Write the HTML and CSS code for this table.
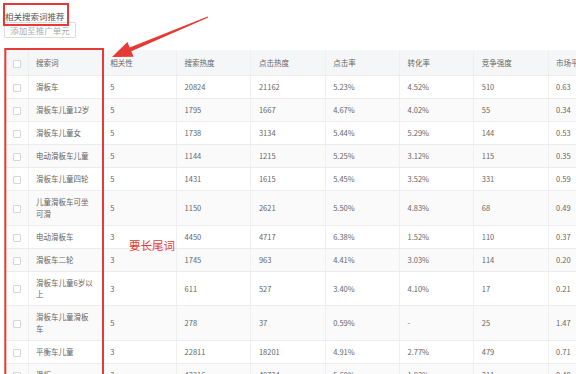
FILE: index.html
```html
<!DOCTYPE html>
<html lang="zh-CN">
<head>
<meta charset="utf-8">
<title>相关搜索词推荐</title>
<link rel="stylesheet" href="styles.css">
</head>
<body>
<div class="page">
  <div class="title">相关搜索词推荐</div>
  <button class="btn" disabled>添加至推广单元</button>
  <table class="grid">
    <colgroup>
      <col class="c-chk"><col class="c-w"><col class="c-w"><col class="c-w"><col class="c-w"><col class="c-w"><col class="c-w"><col class="c-w"><col class="c-w">
    </colgroup>
    <thead>
      <tr><th class="chk"><span class="box"></span></th><th>搜索词</th><th>相关性</th><th>搜索热度</th><th>点击热度</th><th>点击率</th><th>转化率</th><th>竞争强度</th><th>市场平均出价</th></tr>
    </thead>
    <tbody>
      <tr><td class="chk"><span class="box"></span></td><td>滑板车</td><td>5</td><td>20824</td><td>21162</td><td>5.23%</td><td>4.52%</td><td>510</td><td>0.63</td></tr>
      <tr><td class="chk"><span class="box"></span></td><td>滑板车儿童12岁</td><td>5</td><td>1795</td><td>1667</td><td>4.67%</td><td>4.02%</td><td>55</td><td>0.34</td></tr>
      <tr><td class="chk"><span class="box"></span></td><td>滑板车儿童女</td><td>5</td><td>1738</td><td>3134</td><td>5.44%</td><td>5.29%</td><td>144</td><td>0.53</td></tr>
      <tr><td class="chk"><span class="box"></span></td><td>电动滑板车儿童</td><td>5</td><td>1144</td><td>1215</td><td>5.25%</td><td>3.12%</td><td>115</td><td>0.35</td></tr>
      <tr><td class="chk"><span class="box"></span></td><td>滑板车儿童四轮</td><td>5</td><td>1431</td><td>1615</td><td>5.45%</td><td>3.52%</td><td>331</td><td>0.59</td></tr>
      <tr><td class="chk"><span class="box"></span></td><td>儿童滑板车可坐可滑</td><td>5</td><td>1150</td><td>2621</td><td>5.50%</td><td>4.83%</td><td>68</td><td>0.49</td></tr>
      <tr><td class="chk"><span class="box"></span></td><td>电动滑板车</td><td>3</td><td>4450</td><td>4717</td><td>6.38%</td><td>1.52%</td><td>110</td><td>0.37</td></tr>
      <tr><td class="chk"><span class="box"></span></td><td>滑板车二轮</td><td>3</td><td>1745</td><td>963</td><td>4.41%</td><td>3.03%</td><td>114</td><td>0.20</td></tr>
      <tr><td class="chk"><span class="box"></span></td><td>滑板车儿童6岁以上</td><td>3</td><td>611</td><td>527</td><td>3.40%</td><td>4.10%</td><td>17</td><td>0.21</td></tr>
      <tr><td class="chk"><span class="box"></span></td><td>滑板车儿童滑板车</td><td>5</td><td>278</td><td>37</td><td>0.59%</td><td>-</td><td>25</td><td>1.47</td></tr>
      <tr><td class="chk"><span class="box"></span></td><td>平衡车儿童</td><td>3</td><td>22811</td><td>18201</td><td>4.91%</td><td>2.77%</td><td>479</td><td>0.71</td></tr>
      <tr><td class="chk"><span class="box"></span></td><td>滑板</td><td>3</td><td>43216</td><td>40724</td><td>5.60%</td><td>1.93%</td><td>311</td><td>0.48</td></tr>
    </tbody>
  </table>
</div>
<svg class="marks" width="576" height="374" viewBox="0 0 576 374">
  <rect x="4" y="4" width="64" height="21" fill="none" stroke="#e53a35" stroke-width="2"/>
  <rect x="5.3" y="49" width="97.7" height="400" fill="none" stroke="#e53a35" stroke-width="2"/>
  <polygon fill="#e53a35" points="207.7,16.4 129.7,47.5 127.4,41.9 112,57 133.6,56.7 131.3,51.2 208.3,17.6"/>
</svg>
<div class="note">要长尾词</div>
</body>
</html>
```

FILE: styles.css
```css
* { box-sizing: border-box; }
html, body { margin: 0; padding: 0; background: #fff; }
body {
  width: 576px;
  height: 374px;
  overflow: hidden;
  position: relative;
  font-family: "Noto Sans CJK SC", "Noto Sans", sans-serif;
  color: #666;
}
.page { padding: 10px 0 0 4px; }
.title {
  font-size: 8.5px;
  line-height: 12px;
  color: #555;
  padding-left: 1px;
}
.btn {
  display: block;
  height: 16px;
  width: 72px;
  padding: 0;
  border: 1px solid #dcdcdc;
  border-radius: 1px;
  background: #fff;
  color: #aaa;
  font: 8.5px/14px "Noto Sans CJK SC", sans-serif;
}
.grid {
  margin: 12px 0 0 1px;
  border-collapse: collapse;
  table-layout: fixed;
  width: 617.4px;
  font-size: 7.5px;
  line-height: 11.5px;
}
.c-chk { width: 23px; }
.c-w { width: 74.3px; }
.grid th, .grid td {
  text-align: left;
  font-weight: normal;
  vertical-align: middle;
  padding: 5.25px 8.3px 5.25px 7.5px;
  border-right: 1px solid #efefef;
  border-bottom: 1px solid #ececec;
  white-space: normal;
  word-break: break-all;
  overflow: hidden;
}
.grid th {
  background: #f5f6f7;
  padding-top: 6.75px;
  padding-bottom: 6.75px;
  color: #666;
}
.grid tbody tr:nth-child(even) td { background: #fafafa; }
.grid .chk { padding: 0 0 0 8px; }
.box {
  display: inline-block;
  width: 8px;
  height: 8px;
  border: 1px solid #d6d6d6;
  border-radius: 1px;
  background: #fff;
  vertical-align: middle;
}
.marks {
  position: absolute;
  left: 0;
  top: 0;
  pointer-events: none;
}
.note {
  position: absolute;
  left: 129px;
  top: 237px;
  font-size: 11.5px;
  line-height: 16px;
  color: #e53a35;
}
```
